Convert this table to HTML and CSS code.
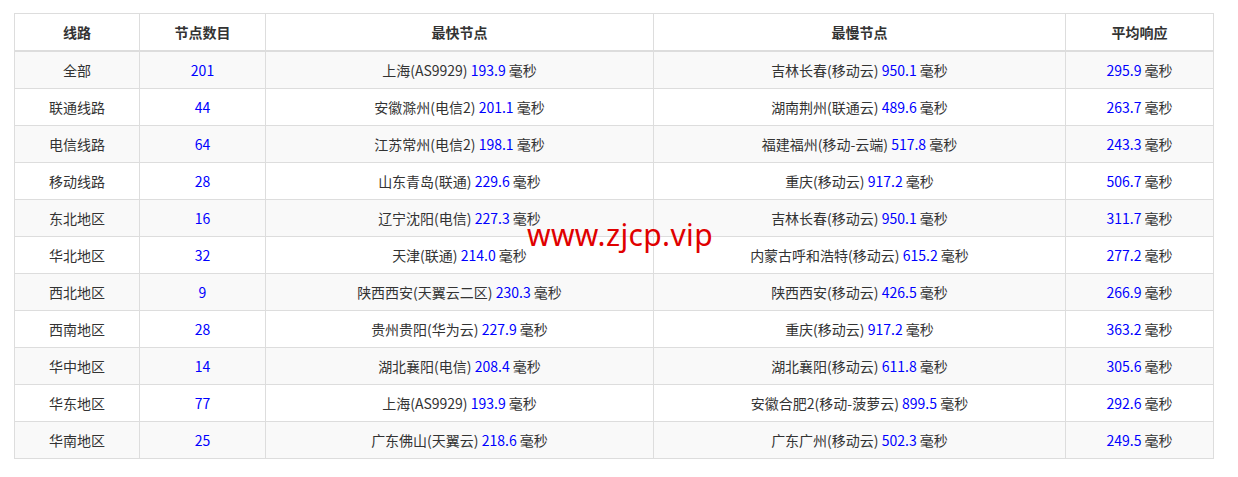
FILE: index.html
```html
<!DOCTYPE html>
<html lang="zh-CN">
<head>
<meta charset="utf-8">
<title>线路测速</title>
<link rel="stylesheet" href="styles.css">
</head>
<body>
<div class="page">
  <table class="speed-table">
    <colgroup>
      <col class="c1"><col class="c2"><col class="c3"><col class="c4"><col class="c5">
    </colgroup>
    <thead>
      <tr><th>线路</th><th>节点数目</th><th>最快节点</th><th>最慢节点</th><th>平均响应</th></tr>
    </thead>
    <tbody>
      <tr><td>全部</td><td><span class="num">201</span></td><td>上海(AS9929) <span class="num">193.9</span> 毫秒</td><td>吉林长春(移动云) <span class="num">950.1</span> 毫秒</td><td><span class="num">295.9</span> 毫秒</td></tr>
      <tr><td>联通线路</td><td><span class="num">44</span></td><td>安徽滁州(电信2) <span class="num">201.1</span> 毫秒</td><td>湖南荆州(联通云) <span class="num">489.6</span> 毫秒</td><td><span class="num">263.7</span> 毫秒</td></tr>
      <tr><td>电信线路</td><td><span class="num">64</span></td><td>江苏常州(电信2) <span class="num">198.1</span> 毫秒</td><td>福建福州(移动-云端) <span class="num">517.8</span> 毫秒</td><td><span class="num">243.3</span> 毫秒</td></tr>
      <tr><td>移动线路</td><td><span class="num">28</span></td><td>山东青岛(联通) <span class="num">229.6</span> 毫秒</td><td>重庆(移动云) <span class="num">917.2</span> 毫秒</td><td><span class="num">506.7</span> 毫秒</td></tr>
      <tr><td>东北地区</td><td><span class="num">16</span></td><td>辽宁沈阳(电信) <span class="num">227.3</span> 毫秒</td><td>吉林长春(移动云) <span class="num">950.1</span> 毫秒</td><td><span class="num">311.7</span> 毫秒</td></tr>
      <tr><td>华北地区</td><td><span class="num">32</span></td><td>天津(联通) <span class="num">214.0</span> 毫秒</td><td>内蒙古呼和浩特(移动云) <span class="num">615.2</span> 毫秒</td><td><span class="num">277.2</span> 毫秒</td></tr>
      <tr><td>西北地区</td><td><span class="num">9</span></td><td>陕西西安(天翼云二区) <span class="num">230.3</span> 毫秒</td><td>陕西西安(移动云) <span class="num">426.5</span> 毫秒</td><td><span class="num">266.9</span> 毫秒</td></tr>
      <tr><td>西南地区</td><td><span class="num">28</span></td><td>贵州贵阳(华为云) <span class="num">227.9</span> 毫秒</td><td>重庆(移动云) <span class="num">917.2</span> 毫秒</td><td><span class="num">363.2</span> 毫秒</td></tr>
      <tr><td>华中地区</td><td><span class="num">14</span></td><td>湖北襄阳(电信) <span class="num">208.4</span> 毫秒</td><td>湖北襄阳(移动云) <span class="num">611.8</span> 毫秒</td><td><span class="num">305.6</span> 毫秒</td></tr>
      <tr><td>华东地区</td><td><span class="num">77</span></td><td>上海(AS9929) <span class="num">193.9</span> 毫秒</td><td>安徽合肥2(移动-菠萝云) <span class="num">899.5</span> 毫秒</td><td><span class="num">292.6</span> 毫秒</td></tr>
      <tr><td>华南地区</td><td><span class="num">25</span></td><td>广东佛山(天翼云) <span class="num">218.6</span> 毫秒</td><td>广东广州(移动云) <span class="num">502.3</span> 毫秒</td><td><span class="num">249.5</span> 毫秒</td></tr>
    </tbody>
  </table>
  <div class="watermark">www.zjcp.vip</div>
</div>
</body>
</html>
```

FILE: styles.css
```css
html, body {
  margin: 0;
  padding: 0;
  background: #fff;
}
body {
  font-family: "Noto Sans CJK SC", "Noto Sans", sans-serif;
  font-size: 14px;
  color: #333;
}
.page {
  position: relative;
  padding: 13px 0 0 14px;
}
.speed-table {
  border-collapse: collapse;
  border-spacing: 0;
  width: 1199px;
  table-layout: fixed;
  border: 1px solid #ddd;
}
.c1 { width: 125px; }
.c2 { width: 126px; }
.c3 { width: 388px; }
.c4 { width: 412px; }
.c5 { width: 148px; }
.speed-table th,
.speed-table td {
  border: 1px solid #ddd;
  padding: 8px;
  line-height: 20px;
  height: 20px;
  text-align: center;
  vertical-align: middle;
  white-space: nowrap;
}
.speed-table th {
  font-weight: bold;
  border-bottom: 2px solid #ddd;
}
.speed-table tbody tr:nth-child(odd) {
  background: #f9f9f9;
}
.num {
  color: #0000ff;
}
.watermark {
  position: absolute;
  left: 527px;
  top: 217px;
  font-family: "Noto Sans", sans-serif;
  font-size: 30px;
  line-height: 36px;
  color: #e00000;
  letter-spacing: 0.35px;
}
```
